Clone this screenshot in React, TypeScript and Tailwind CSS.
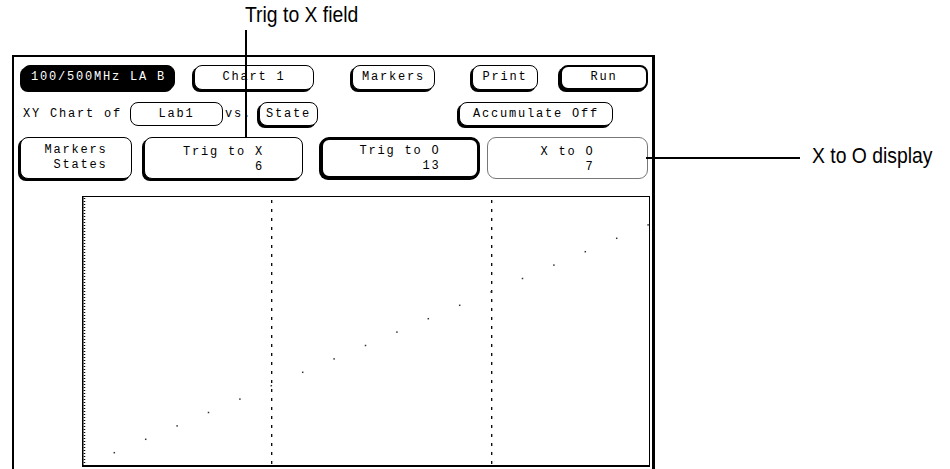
import React from "react";

const mono = "font-['Liberation_Mono',monospace] text-[12px] tracking-[1.8px] leading-[15px]";
const label = "font-['Liberation_Sans',Arial,sans-serif] text-[22px] leading-[26px] text-black origin-left scale-x-[0.88] whitespace-nowrap";
const btnBase = "flex items-center justify-center rounded-[8px] border border-black shadow-[-2px_2px_0_0_#000] shrink-0 text-black";
const btn = `${btnBase} bg-white`;

function Chart() {
  const pts = Array.from({ length: 18 }, (_, k) => ({
    x: 32.3 + 31.4 * k,
    y: 256.7 - 13.4 * k,
  }));
  return (
    <svg width="568" height="271" viewBox="0 0 568 271" className="block">
      <line x1="0" y1="0.5" x2="568" y2="0.5" stroke="#000" strokeWidth="1" />
      <line x1="567.5" y1="0" x2="567.5" y2="271" stroke="#000" strokeWidth="1" />
      <line x1="0" y1="270" x2="568" y2="270" stroke="#000" strokeWidth="2" />
      <line x1="0.75" y1="0" x2="0.75" y2="271" stroke="#000" strokeWidth="1.5" />
      <line x1="2.5" y1="2" x2="2.5" y2="269" stroke="#000" strokeWidth="1.5" strokeDasharray="1 2" />
      <line x1="189.7" y1="4" x2="189.7" y2="268" stroke="#000" strokeWidth="1.3" strokeDasharray="3 6" />
      <line x1="409.7" y1="4" x2="409.7" y2="268" stroke="#000" strokeWidth="1.3" strokeDasharray="3 6" />
      {pts.map((p, i) => (
        <rect key={i} x={p.x - 0.75} y={p.y - 0.75} width="1.5" height="1.5" fill="#333" />
      ))}
    </svg>
  );
}

export default function App() {
  return (
    <div className="relative w-[950px] h-[469px] overflow-hidden bg-white">
      <div className="h-[55px] pl-[245px] pt-[2px]">
        <div className={label}>Trig to X field</div>
      </div>
      <div className="flex">
        <div className="ml-[12px] w-[643px] h-[430px] shrink-0 border-l-2 border-t-2 border-r-[3px] border-black flex flex-col">
          {/* Row 1 */}
          <div className="flex pt-[8px] h-[33px]">
            <div className={`${btnBase} bg-black ml-[8px] w-[153px] h-[25px]`}>
              <span className={`${mono} text-white`}>100/500MHz LA B</span>
            </div>
            <div className={`${btn} ml-[19px] w-[120px] h-[25px]`}>
              <span className={mono}>Chart 1</span>
            </div>
            <div className={`${btn} ml-[38px] w-[83px] h-[25px]`}>
              <span className={mono}>Markers</span>
            </div>
            <div className={`${btn} ml-[37px] w-[66px] h-[25px]`}>
              <span className={mono}>Print</span>
            </div>
            <div className={`${btn} ml-[22px] w-[88px] h-[25px] border-2`}>
              <span className={mono}>Run</span>
            </div>
          </div>
          {/* Row 2 */}
          <div className="flex items-center mt-[12px] h-[24px] text-black">
            <span className={`${mono} ml-[9px] w-[107px] shrink-0`}>XY Chart of</span>
            <div className="flex items-center justify-center rounded-[8px] border border-black w-[93px] h-[24px] shrink-0">
              <span className={mono}>Lab1</span>
            </div>
            <span className={`${mono} ml-[2px] w-[34px] shrink-0`}>vs.</span>
            <div className={`${btn} w-[59px] h-[24px]`}>
              <span className={mono}>State</span>
            </div>
            <div className={`${btn} ml-[141px] w-[154px] h-[24px]`}>
              <span className={mono}>Accumulate Off</span>
            </div>
          </div>
          {/* Row 3 */}
          <div className="flex mt-[11px] h-[42px]">
            <div className={`${btn} ml-[6px] w-[112px] h-[42px]`}>
              <span className={`${mono} whitespace-pre`}>{"Markers\n States"}</span>
            </div>
            <div className={`${btn} ml-[12px] w-[159px] h-[42px] pt-[3px]`}>
              <div className="flex flex-col items-end">
                <span className={mono}>Trig to X</span>
                <span className={mono}>6</span>
              </div>
            </div>
            <div className="flex items-center justify-center rounded-[9px] border-[3px] border-black bg-white shadow-[-1px_1px_0_0_#000] ml-[17px] w-[160px] h-[42px] shrink-0 text-black pt-[2px]">
              <div className="flex flex-col items-end">
                <span className={mono}>Trig to O</span>
                <span className={mono}>13</span>
              </div>
            </div>
            <div className="flex items-center justify-center rounded-[9px] border border-[#777] bg-white ml-[7px] w-[161px] h-[42px] shrink-0 text-black pt-[3px]">
              <div className="flex flex-col items-end">
                <span className={mono}>X to O</span>
                <span className={mono}>7</span>
              </div>
            </div>
          </div>
          {/* Chart */}
          <div className="ml-[68px] mt-[17px]">
            <Chart />
          </div>
        </div>
        <div className="ml-[157px] mt-[88px]">
          <div className={label}>X to O display</div>
        </div>
      </div>
      {/* callout lines */}
      <div className="absolute left-[245px] top-[30px] w-[2px] h-[108px] bg-black" />
      <div className="absolute left-[646px] top-[157px] w-[154px] h-[2px] bg-black" />
    </div>
  );
}
